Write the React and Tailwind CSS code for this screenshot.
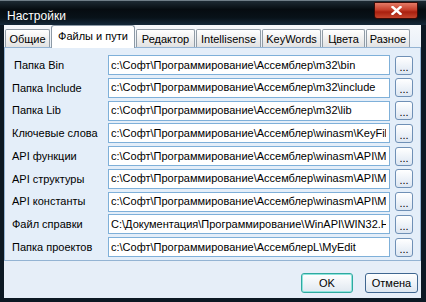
import React from "react";

const rows = [
  ["Папка Bin", "c:\\Софт\\Программирование\\Ассемблер\\m32\\bin", true],
  ["Папка Include", "c:\\Софт\\Программирование\\Ассемблер\\m32\\include"],
  ["Папка Lib", "c:\\Софт\\Программирование\\Ассемблер\\m32\\lib"],
  ["Ключевые слова", "c:\\Софт\\Программирование\\Ассемблер\\winasm\\KeyFile"],
  ["API функции", "c:\\Софт\\Программирование\\Ассемблер\\winasm\\API\\M"],
  ["API структуры", "c:\\Софт\\Программирование\\Ассемблер\\winasm\\API\\M"],
  ["API константы", "c:\\Софт\\Программирование\\Ассемблер\\winasm\\API\\M"],
  ["Файл справки", "C:\\Документация\\Программирование\\WinAPI\\WIN32.H"],
  ["Папка проектов", "c:\\Софт\\Программирование\\АссемблерL\\MyEdit"],
];

const tabs = [
  ["Общие", "w-[45px]"],
  ["Файлы и пути", "w-[84px]", true],
  ["Редактор", "w-[59px]"],
  ["Intellisense", "w-[65px]"],
  ["KeyWords", "w-[59px]"],
  ["Цвета", "w-[43px]"],
  ["Разное", "w-[44px]"],
];

export default function App() {
  return (
    <div className="w-[426px] h-[302px] flex flex-col bg-[#0c1823] text-[11px] text-black font-['Liberation_Sans',Arial,sans-serif] overflow-hidden">
      {/* Title bar */}
      <div className="h-[25px] flex items-start justify-between border-t border-[#6f7d87] bg-[linear-gradient(to_bottom,#1d2a33_0%,#060c11_35%,#081219_70%,#15293a_100%)]">
        <div className="pl-[7px] pt-[9px] text-white text-[12px] leading-[12px]">Настройки</div>
        <div className="mt-[1px] mr-[8px] w-[44px] h-[17px] rounded-b-[3px] border border-[#3b0b06] bg-[linear-gradient(to_bottom,#e47a66_0%,#c6402c_45%,#a9200f_60%,#c5442c_100%)] flex items-center justify-center">
          <svg width="11" height="9" viewBox="0 0 11 9">
            <path d="M1.5 1 L9.5 8 M9.5 1 L1.5 8" stroke="white" strokeWidth="2.4" strokeLinecap="square" />
          </svg>
        </div>
      </div>

      {/* Body */}
      <div className="flex-1 ml-[4px] mr-[5px] mb-[4px] bg-[#e6eef8] flex flex-col">
        {/* Tabs */}
        <div className="h-[22px] flex items-end gap-[1px] pl-[1px] bg-[linear-gradient(to_bottom,#f6f8fb,#e9f0f8)] relative z-10">
          {tabs.map(([t, w, sel]) =>
            sel ? (
              <div
                key={t}
                className={`${w} h-[23px] -mb-[1px] bg-white border border-b-0 border-[#8d9aa6] rounded-t-[3px] flex items-start justify-center pt-[4px] leading-[13px]`}
              >
                {t}
              </div>
            ) : (
              <div
                key={t}
                className={`${w} h-[18px] border border-b-0 border-[#919ca6] rounded-t-[2px] bg-[linear-gradient(to_bottom,#ffffff,#e2e2e2)] flex items-center justify-center pt-[2px] leading-[13px]`}
              >
                {t}
              </div>
            )
          )}
        </div>

        {/* Panel */}
        <div className="h-[214px] border border-[#93b3d3] bg-[#e4eef9] pt-[7px] pl-[7px] flex flex-col gap-y-[2.75px]">
          {rows.map(([label, value, shift]) => (
            <div key={label} className="flex items-center h-[20px]">
              <div className={`w-[96px] ${shift ? "pl-[2px]" : ""}`}>{label}</div>
              <div className="w-[282px] h-[20px] border border-[#7fb0d9] bg-white pl-[2px] pr-[3px] flex items-center overflow-hidden leading-[13px]">
                <span className="flex-1 min-w-0 overflow-hidden whitespace-nowrap block">{value}</span>
              </div>
              <div className="ml-[5px] w-[18px] h-[19px] rounded-[3px] border border-[#6f90b6] bg-[linear-gradient(to_bottom,#ffffff,#dce6f2)] flex items-end justify-center pb-[2px] leading-[10px]">
                ...
              </div>
            </div>
          ))}
        </div>

        {/* Footer */}
        <div className="flex-1 flex justify-end items-start pt-[12px] pr-[3px] gap-[12px]">
          <div className="w-[52px] h-[20px] rounded-[3px] border border-[#2fa9a0] bg-[linear-gradient(to_bottom,#ffffff,#e0e8f0)] flex items-center justify-center shadow-[inset_0_0_0_1px_#8fe4dd] leading-[13px]">
            OK
          </div>
          <div className="w-[53px] h-[20px] rounded-[3px] border border-[#3f6690] bg-[linear-gradient(to_bottom,#ffffff,#dde6f0)] flex items-center justify-center leading-[13px]">
            Отмена
          </div>
        </div>
      </div>
    </div>
  );
}
